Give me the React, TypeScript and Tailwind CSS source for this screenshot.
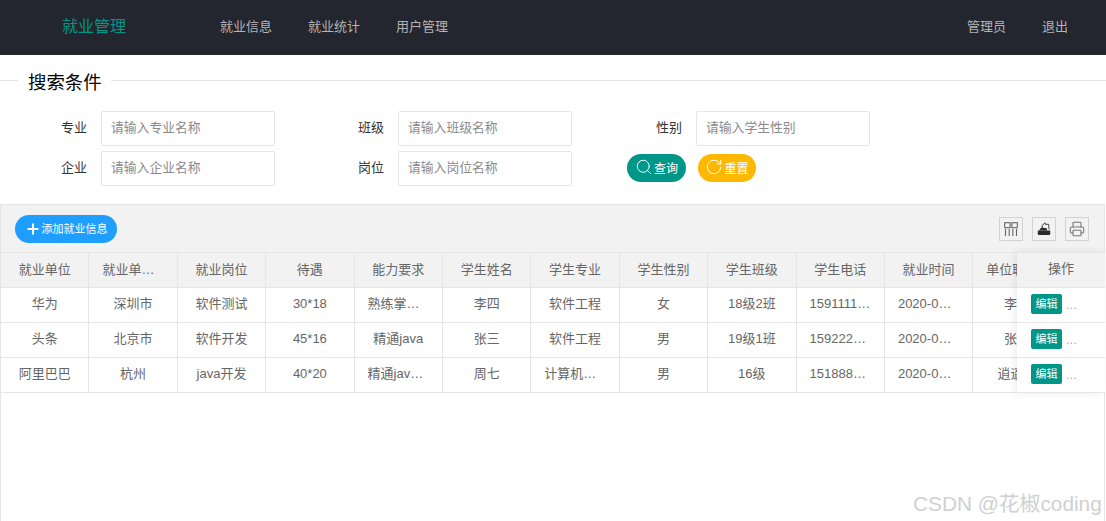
import React from 'react'
import { Search, RotateCw, Plus, Printer } from 'lucide-react'

const columns = ['就业单位', '就业单位城市', '就业岗位', '待遇', '能力要求', '学生姓名', '学生专业', '学生性别', '学生班级', '学生电话', '就业时间', '单位联系人']

const rows = [
  ['华为', '深圳市', '软件测试', '30*18', '熟练掌握java', '李四', '软件工程', '女', '18级2班', '15911112222', '2020-0…', '李四'],
  ['头条', '北京市', '软件开发', '45*16', '精通java', '张三', '软件工程', '男', '19级1班', '15922223333', '2020-0…', '张三'],
  ['阿里巴巴', '杭州', 'java开发', '40*20', '精通java开发', '周七', '计算机科学', '男', '16级', '15188889999', '2020-0…', '逍遥子'],
]

function Field({ label, placeholder }: { label: string; placeholder: string }) {
  return (
    <div className="flex w-[297px] items-center">
      <label className="w-[87px] pb-[1px] text-right text-[13px] text-[#333]">{label}</label>
      <input
        className="ml-[14px] h-[35px] w-[174px] rounded-[2px] border border-[#e6e6e6] bg-white pb-[2px] pl-[9px] text-[12.8px] outline-none placeholder:text-[#8a8a8a]"
        placeholder={placeholder}
      />
    </div>
  )
}

function Cell({ children, head, left }: { children: React.ReactNode; head?: boolean; left?: boolean }) {
  return (
    <div className={`w-[88.4px] shrink-0 border-r border-[#e6e6e6] px-[13px] ${left ? 'text-left' : 'text-center'} ${head ? 'leading-[33px]' : 'leading-[32px]'}`}>
      <div className="truncate">{children}</div>
    </div>
  )
}

function ToolButton({ children }: { children: React.ReactNode }) {
  return (
    <button className="flex h-[24px] w-[24px] items-center justify-center border border-[#d2d2d2] text-[#333]">
      {children}
    </button>
  )
}

export default function App() {
  return (
    <div className="relative h-[521px] w-[1106px] overflow-hidden bg-white font-['Liberation_Sans','Noto_Sans_CJK_SC',sans-serif]">
      <header className="flex h-[55px] items-center bg-[#23262e] pb-[1px] text-[13px] text-[#b4b4b4]">
        <div className="ml-[62px] w-[158px] text-[16px] text-[#009688]">就业管理</div>
        <nav className="flex gap-[36px]">
          <a>就业信息</a>
          <a>就业统计</a>
          <a>用户管理</a>
        </nav>
        <div className="ml-auto mr-[38px] flex gap-[36px]">
          <a>管理员</a>
          <a>退出</a>
        </div>
      </header>

      <div className="mt-[13px] flex h-[26px] items-center">
        <div className="mt-[-1px] h-px w-[18px] bg-[#e6e6e6]" />
        <div className="pl-[10px] pr-[9px] pt-[3px] text-[18.4px] text-black">搜索条件</div>
        <div className="mt-[-1px] h-px flex-1 bg-[#e6e6e6]" />
      </div>

      <form className="mt-[17px] flex flex-col gap-[5px]">
        <div className="flex">
          <Field label="专业" placeholder="请输入专业名称" />
          <Field label="班级" placeholder="请输入班级名称" />
          <div className="ml-[1px]">
            <Field label="性别" placeholder="请输入学生性别" />
          </div>
        </div>
        <div className="flex items-center">
          <Field label="企业" placeholder="请输入企业名称" />
          <Field label="岗位" placeholder="请输入岗位名称" />
          <div className="mb-[2px] ml-[33px] flex gap-[12px]">
            <button type="button" className="flex h-[28px] w-[59px] items-center justify-center rounded-full bg-[#009688] text-[12px] text-white">
              <Search size={18} strokeWidth={1.3} className="mb-[2px]" />
              <span className="ml-[1px] mt-[2px]">查询</span>
            </button>
            <button type="button" className="flex h-[28px] w-[58px] items-center justify-center rounded-full bg-[#ffb800] text-[12px] text-white">
              <RotateCw size={18} strokeWidth={1.3} className="mb-[2px]" />
              <span className="ml-[1px] mt-[2px]">重置</span>
            </button>
          </div>
        </div>
      </form>

      <section className="relative mt-[18px] h-[317px] w-[1105px] border border-b-0 border-[#e6e6e6] text-[13px] text-[#666]">
        <div className="flex h-[47px] items-center justify-between bg-[#f2f2f2] pl-[14px] pr-[15px]">
          <button className="flex h-[28px] w-[102px] items-center justify-center rounded-full bg-[#1e9fff] text-[11px] text-white">
            <Plus size={16} strokeWidth={3} />
            <span className="ml-[1px] mt-[1px]">添加就业信息</span>
          </button>
          <div className="flex gap-[9px]">
            <ToolButton>
              <svg width="14" height="14" viewBox="0 0 14 14" fill="none" stroke="#666" strokeWidth="1.1">
                <rect x="0.7" y="0.7" width="5.4" height="5" />
                <rect x="7.9" y="0.7" width="5.4" height="5" />
                <path d="M1.5 7v7M5.2 7v7M8.8 7v7M12.5 7v7" />
              </svg>
            </ToolButton>
            <ToolButton>
              <svg width="14" height="15" viewBox="0 0 14 15">
                <path d="M0.8 9.5h12.4V13a1 1 0 0 1-1 1H1.8a1 1 0 0 1-1-1z" fill="#2b2b2b" />
                <path d="M2.4 9.5c.2-1.6 1.4-2.8 3-3l4.6 1v2z" fill="#2b2b2b" />
                <path d="M5.2 7V4.2l3-2.4v1.5h3.4l.4 5" fill="none" stroke="#444" strokeWidth="1" />
              </svg>
            </ToolButton>
            <ToolButton>
              <Printer size={16} strokeWidth={1.6} color="#777" />
            </ToolButton>
          </div>
        </div>

        <div className="overflow-hidden">
          <div className="flex h-[36px] w-max border-y border-[#e6e6e6] bg-[#f2f2f2]">
            {columns.map((c) => (
              <Cell key={c} head>{c}</Cell>
            ))}
          </div>
          {rows.map((r) => (
            <div key={r[0]} className="flex h-[35px] w-max border-b border-[#e6e6e6]">
              {r.map((v, i) => (
                <Cell key={i} left={i === 10}>{v}</Cell>
              ))}
            </div>
          ))}
        </div>

        {/* fixed column on top of the table */}
        <div className="absolute left-[1016px] top-[47px] w-[88px] bg-white shadow-[-2px_0_8px_rgba(0,0,0,0.08)]">
          <div className="h-[36px] border-y border-[#e6e6e6] bg-[#f2f2f2] text-center leading-[32px]">操作</div>
          {rows.map((r) => (
            <div key={r[0]} className="flex h-[35px] items-center border-b border-[#e6e6e6] pl-[14px]">
              <button className="mb-[2px] h-[20px] w-[31px] rounded-[2px] bg-[#009688] text-[11px] text-white">编辑</button>
              <span className="ml-[4px] text-[#aaa]">...</span>
            </div>
          ))}
        </div>
      </section>

      <div className="absolute left-[913px] top-[488px] text-[20.8px] text-[#d0d0d0]">CSDN @花椒coding</div>
    </div>
  )
}
